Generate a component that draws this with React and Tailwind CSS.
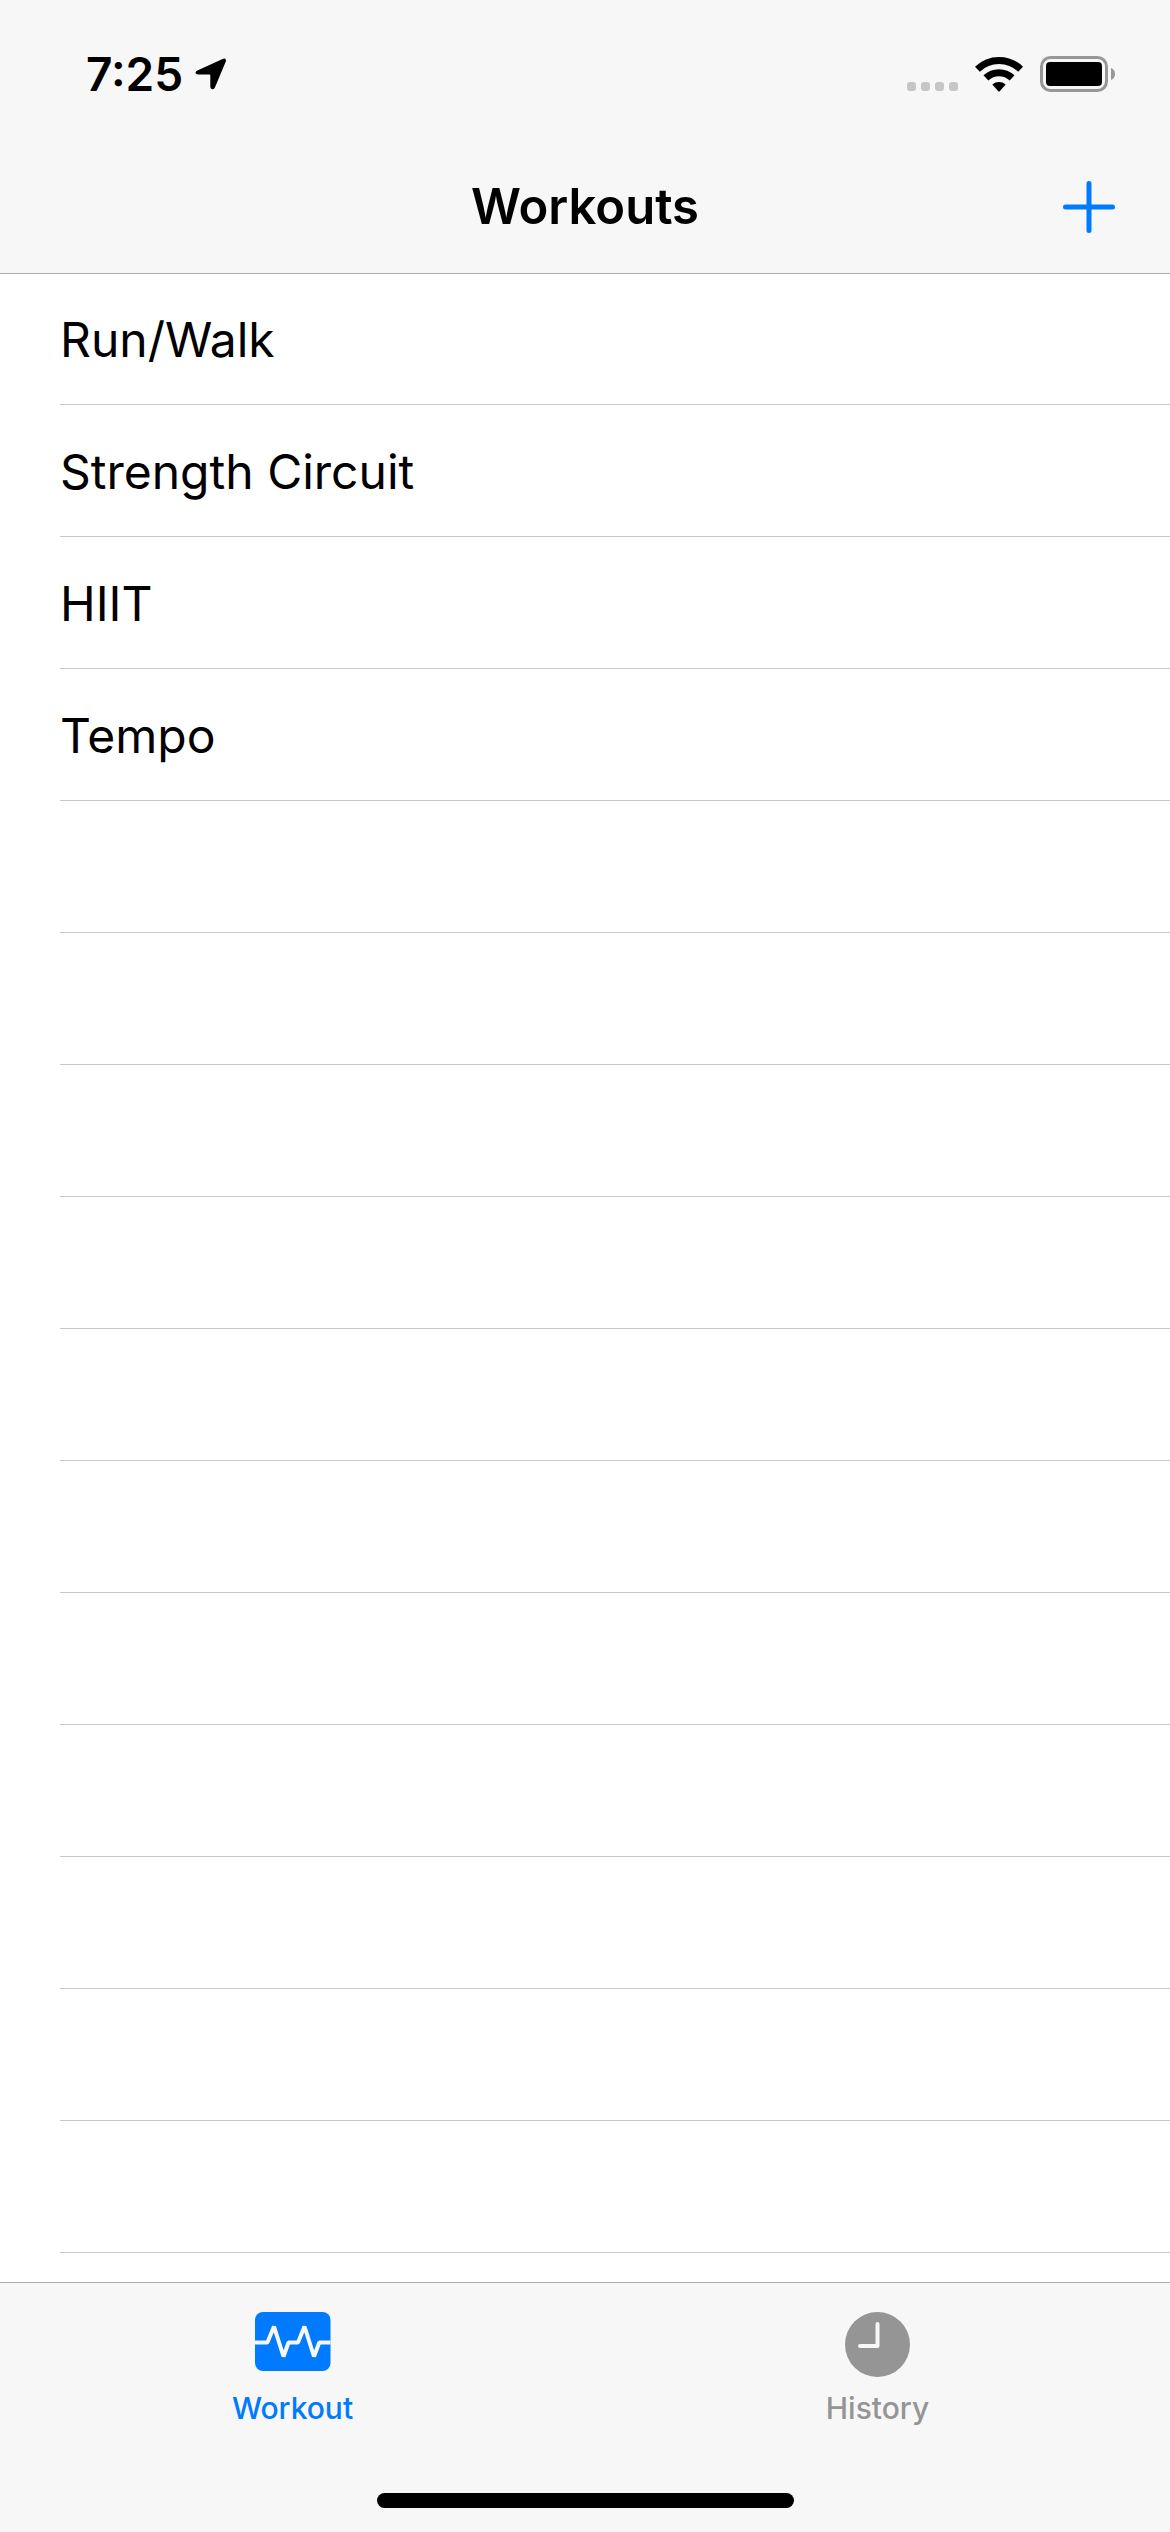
const workouts = ["Run/Walk", "Strength Circuit", "HIIT", "Tempo"];
const emptyRows = Array.from({ length: 11 }, (_, i) => i);

function LocationIcon() {
  return (
    <svg className="h-8 w-8" viewBox="0 0 32 32" aria-hidden="true">
      <path
        d="M2.4 12.6 27.6 0.9Q31.6 -0.4 30.8 3.6L20 29.2Q19.2 31.4 17.3 31.2Q15.3 31 15.3 28.8V17.4Q15.3 16.4 14.3 16.4H3Q0.9 16.3 0.5 14.9Q0.3 13.5 2.4 12.6Z"
        fill="currentColor"
      />
    </svg>
  );
}

function WifiIcon() {
  return (
    <svg className="h-9 w-12" viewBox="0 0 48 36" aria-hidden="true">
      <g fill="none" stroke="currentColor" strokeWidth="7">
        <path d="M2.4 13.2A31 31 0 0 1 45.6 13.2" />
        <path d="M10.9 21.9A19 19 0 0 1 37.1 21.9" />
      </g>
      <path d="M17.3 28.4A10.5 10.5 0 0 1 30.7 28.4L24.7 35.2Q24 36 23.3 35.2Z" fill="currentColor" />
    </svg>
  );
}

function BatteryIcon() {
  return (
    <svg className="h-9 w-[75px]" viewBox="0 0 75 36" aria-hidden="true">
      <rect x="1.5" y="1.5" width="65" height="33" rx="9" fill="none" stroke="#979797" strokeWidth="3" />
      <rect x="6" y="6" width="56" height="24" rx="4" fill="currentColor" />
      <path d="M71 12Q75 13.5 75 18Q75 22.5 71 24Z" fill="#979797" />
    </svg>
  );
}

function PlusIcon() {
  return (
    <svg className="h-[52px] w-[52px]" viewBox="0 0 52 52" aria-hidden="true">
      <path d="M26 2.5V49.5M2.5 26H49.5" fill="none" stroke="currentColor" strokeWidth="5" strokeLinecap="round" />
    </svg>
  );
}

function WorkoutIcon() {
  return (
    <svg className="h-[59px] w-[76px]" viewBox="0 0 76 59" aria-hidden="true">
      <rect width="75.5" height="59" rx="8" fill="currentColor" />
      <path
        d="M0 30.5H12.4L19 14.5L28.5 44.5L33.5 30.5H43L49.5 14.5L59 44.5L64.3 30.5H75.5"
        fill="none"
        stroke="#f7f7f7"
        strokeWidth="4"
        strokeLinejoin="bevel"
      />
    </svg>
  );
}

function HistoryIcon() {
  return (
    <svg className="h-[65px] w-[65px]" viewBox="0 0 65 65" aria-hidden="true">
      <circle cx="32.5" cy="32.5" r="32.5" fill="currentColor" />
      <path
        d="M32.5 12V34H15"
        fill="none"
        stroke="#f7f7f7"
        strokeWidth="4"
        strokeLinecap="round"
        strokeLinejoin="round"
      />
    </svg>
  );
}

function SignalDots() {
  return (
    <div className="flex gap-[5px] pb-px text-[#c6c6c6]">
      <span className="size-[9px] rounded-[3px] bg-current" />
      <span className="size-[9px] rounded-[3px] bg-current" />
      <span className="size-[9px] rounded-[3px] bg-current" />
      <span className="size-[9px] rounded-[3px] bg-current" />
    </div>
  );
}

function StatusBar() {
  return (
    <div className="flex h-[148px] items-center justify-between pr-[55px] pl-[86px]">
      <div className="flex items-center gap-3">
        <span className="text-[46px] leading-none font-semibold">7:25</span>
        <LocationIcon />
      </div>
      <div className="flex items-end gap-[17px]">
        <SignalDots />
        <WifiIcon />
        <BatteryIcon />
      </div>
    </div>
  );
}

export default function App() {
  return (
    <div className="flex h-screen flex-col bg-white font-['Inter','Liberation_Sans',sans-serif] text-black">
      <header className="relative z-10 flex h-[273px] shrink-0 flex-col bg-[#f7f7f7] shadow-[0_1px_0_#acacac]">
        <StatusBar />
        <div className="grid grid-cols-[1fr_auto_1fr] items-center px-[55px] pt-[30px]">
          <h1 className="col-start-2 text-[49px] leading-[58px] font-semibold">Workouts</h1>
          <button type="button" aria-label="Add workout" className="justify-self-end text-[#007aff]">
            <PlusIcon />
          </button>
        </div>
      </header>

      <main className="min-h-0 flex-1 overflow-hidden">
        <ul className="pl-[60px]">
          {workouts.map((name) => (
            <li key={name} className="flex h-[132px] items-center border-b border-[#c6c6c8] pt-0.5 text-[48px] leading-[60px]">
              {name}
            </li>
          ))}
          {emptyRows.map((row) => (
            <li key={row} aria-hidden="true" className="h-[132px] border-b border-[#c6c6c8]" />
          ))}
        </ul>
      </main>

      <footer className="flex h-[250px] shrink-0 flex-col items-center justify-between border-t border-[#acacac] bg-[#f7f7f7] pb-6">
        <nav className="grid w-full grid-cols-2 text-[30px] leading-9 font-medium">
          <button type="button" aria-current="page" className="flex flex-col items-center pt-[29px] text-[#007aff]">
            <span className="h-[78px]">
              <WorkoutIcon />
            </span>
            Workout
          </button>
          <button type="button" className="flex flex-col items-center pt-[29px] text-[#959595]">
            <span className="h-[78px]">
              <HistoryIcon />
            </span>
            History
          </button>
        </nav>
        <div className="h-[15px] w-[417px] rounded-full bg-black" />
      </footer>
    </div>
  );
}
